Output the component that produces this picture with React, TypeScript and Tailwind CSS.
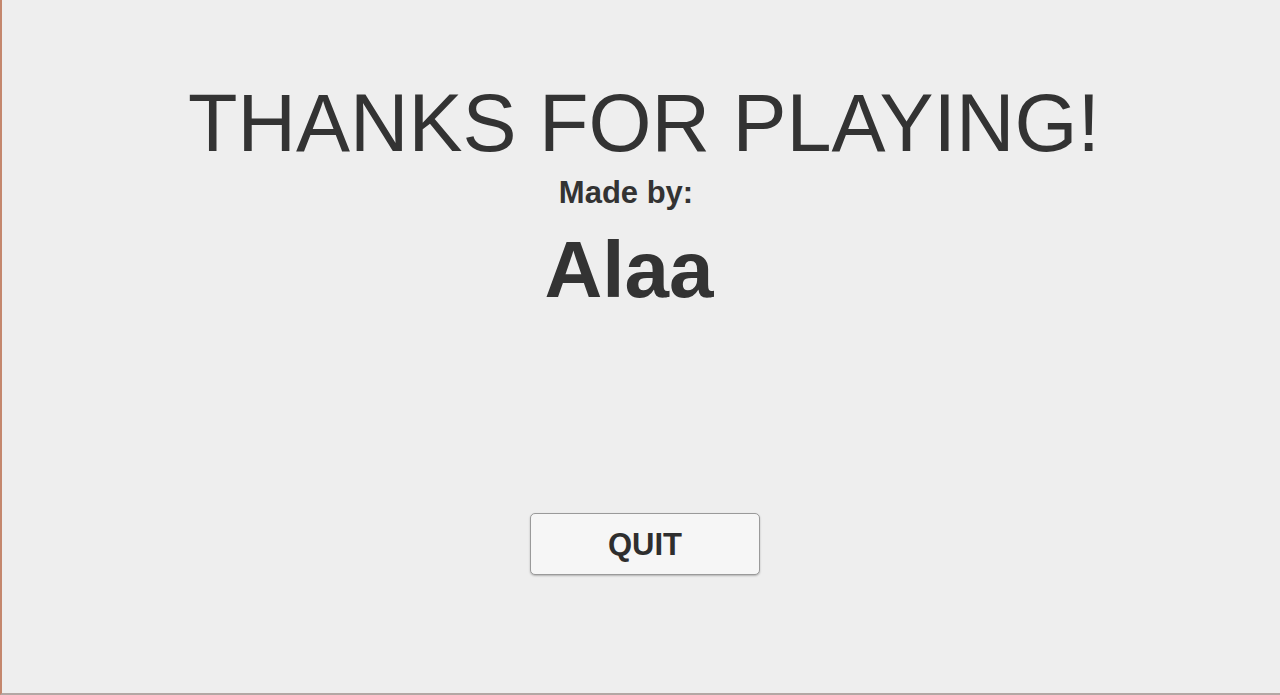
export default function App() {
  return (
    <div
      className="flex h-[695px] w-full flex-col border-b-2 border-l-2 border-b-[#b3a7a4] border-l-[#c4876d] bg-[#eeeeee] text-[#333333]"
      style={{ fontFamily: '"Liberation Sans", Arial, sans-serif' }}
    >
      {/* end screen heading */}
      <div className="flex justify-center pt-[83px] pl-[6px]">
        <h1 className="text-[81px] font-normal leading-none">THANKS FOR PLAYING!</h1>
      </div>
      <div className="mt-[13px] flex justify-center pr-[30px]">
        <p className="text-[31px] font-bold leading-none">Made by:</p>
      </div>
      <div className="mt-[22px] flex justify-center pr-[24px]">
        <p className="text-[80px] font-bold leading-none">Alaa</p>
      </div>

      <div className="mt-[203px] flex justify-center pl-[8px]">
        <button className="h-[62px] w-[230px] rounded-[5px] border border-[#9a9a9a] bg-[#f6f6f6] text-[31px] font-bold leading-none text-[#2e2e2e] shadow-[0_1px_2px_rgba(0,0,0,0.25)]">
          QUIT
        </button>
      </div>
    </div>
  )
}
